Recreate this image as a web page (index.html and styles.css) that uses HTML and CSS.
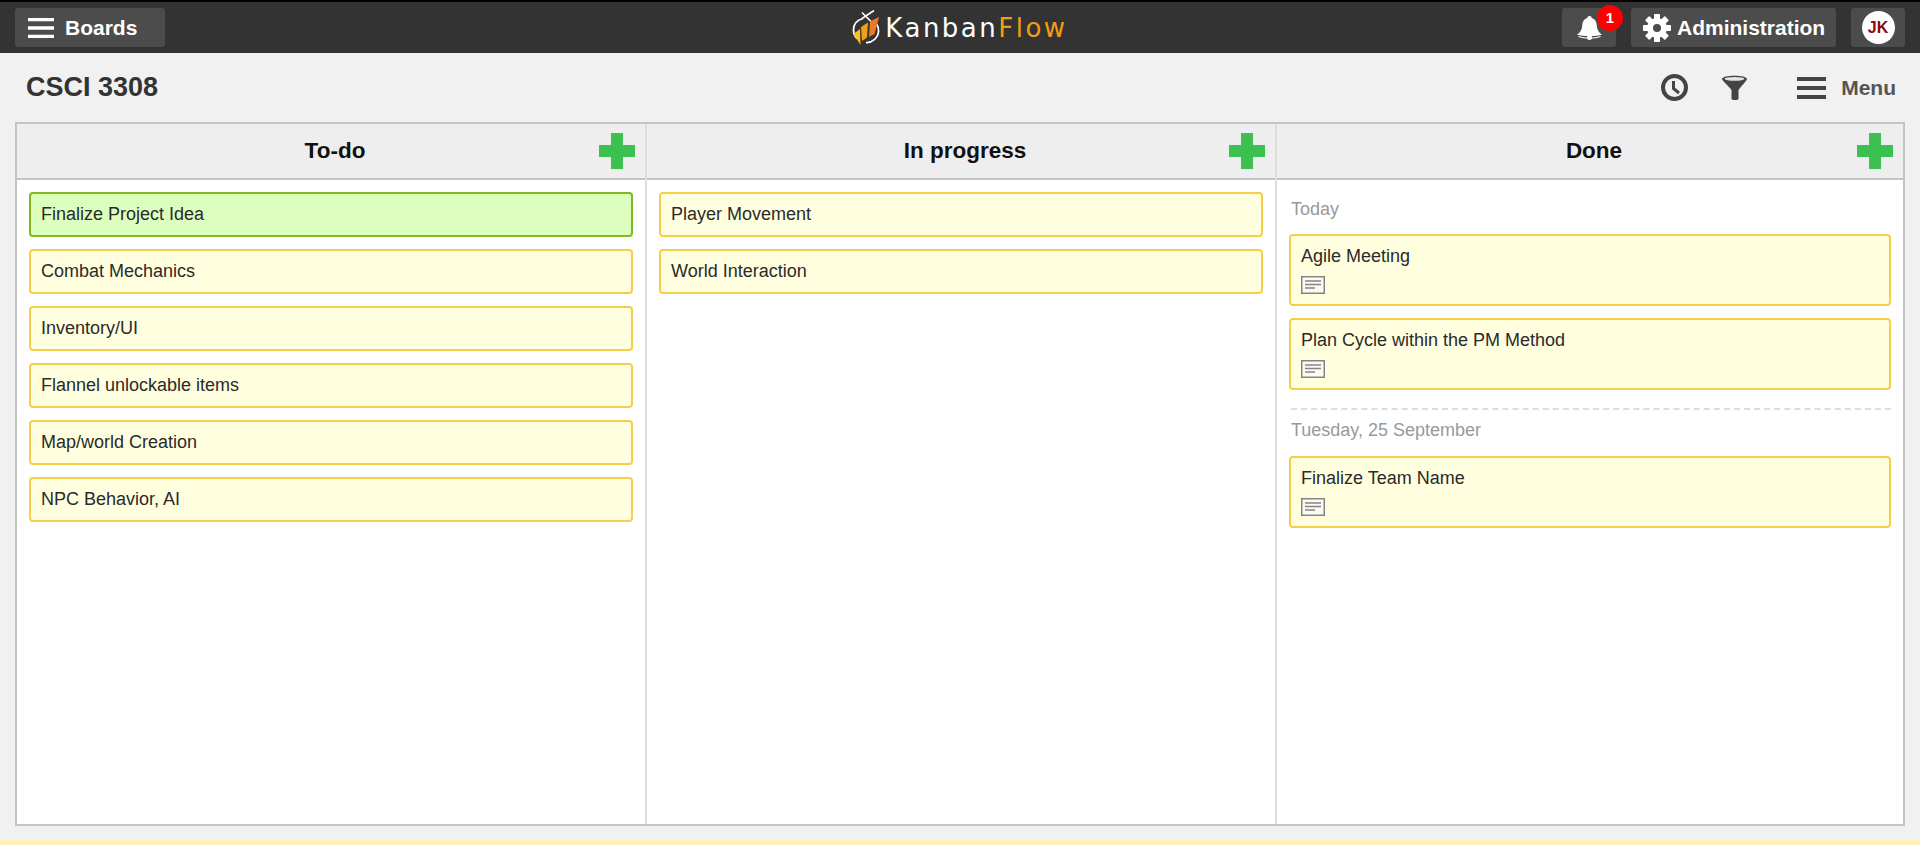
FILE: index.html
```html
<!DOCTYPE html>
<html lang="en">
<head>
  <meta charset="UTF-8" />
  <title>CSCI 3308 - KanbanFlow</title>
  <link rel="stylesheet" href="styles.css">
</head>
<body>

<svg class="sprites" width="0" height="0">
  <symbol id="note" viewBox="0 0 24 18">
    <rect x="0.75" y="0.75" width="22.5" height="16.5" fill="#fbfbf4" stroke="#858585" stroke-width="1.5"/>
    <path d="M4 5h16M4 8.500h16M4 12h10" stroke="#858585" stroke-width="1.300" fill="none"/>
  </symbol>
  <symbol id="plus" viewBox="0 0 36 36">
    <path d="M12 0h12v12h12v12H24v12H12V24H0V12h12z" fill="#3cc04f"/>
  </symbol>
</svg>

<!-- Top bar -->
<header class="topbar">
  <div class="topbar-left">
    <a class="top-btn boards-btn">
      <svg class="burger" width="26" height="20" viewBox="0 0 26 20"><path d="M0 1.500h26M0 10h26M0 18.500h26" stroke="#fff" stroke-width="3.400"/></svg>
      Boards
    </a>
  </div>
  <div class="logo">
    <svg width="28" height="35" viewBox="8 6 28 35">
      <path d="M19 14.500C13 16 9.500 20.500 9.500 26c0 3.500 1.500 6.500 3.500 8.500M22 38.500c6 .5 12-4.500 12.500-11 .2-3-.5-5.500-2-7.500" fill="none" stroke="#fff" stroke-width="1.800"/>
      <path d="M18 8.500l10 10M30 6.500l-12 8" fill="none" stroke="#fff" stroke-width="1.600"/>
      <path d="M9.500 30l6.500-5 .5 16z" fill="#f7c01a"/>
      <path d="M17 23l7-4.500-1 15-5 3.500z" fill="#f0a016"/>
      <path d="M26 17.500l9-4.500-4.500 17-5.500 3z" fill="#ec7a22"/>
    </svg>
    <span class="logo-text">Kanban<span class="logo-flow">Flow</span></span>
  </div>
  <div class="topbar-right">
    <a class="top-btn bell-btn">
      <svg width="25" height="24" viewBox="0 0 25 24">
        <path d="M12.500 0c1.400 0 2.200.8 2.200 2 3.300 1 5 3.800 5.100 7.500.1 4 2 7 5.200 9.200-3 .9-7 1.300-12.500 1.300S3 19.600 0 18.700c3.200-2.200 5.100-5.200 5.200-9.200C5.300 5.800 7 3 10.300 2c0-1.200.8-2 2.200-2z" fill="#fff"/>
        <path d="M1.500 20.500c3 1.200 6.500 1.700 11 1.700s8-.5 11-1.700" fill="none" stroke="#fff" stroke-width="1.200"/>
        <circle cx="12.500" cy="21.500" r="2.500" fill="#fff"/>
      </svg>
      <span class="badge">1</span>
    </a>
    <a class="top-btn admin-btn">
      <svg width="28" height="28" viewBox="0 0 28 28">
        <g fill="#fff">
          <rect x="11" y="0" width="6" height="28" rx="0.800"/>
          <rect x="11" y="0" width="6" height="28" rx="0.800" transform="rotate(45 14 14)"/>
          <rect x="11" y="0" width="6" height="28" rx="0.800" transform="rotate(90 14 14)"/>
          <rect x="11" y="0" width="6" height="28" rx="0.800" transform="rotate(135 14 14)"/>
          <circle cx="14" cy="14" r="10"/>
        </g>
        <circle cx="14" cy="14" r="4" fill="#4c4c4c"/>
      </svg>
      Administration
    </a>
    <a class="top-btn user-btn"><span class="avatar">JK</span></a>
  </div>
</header>

<!-- Board title and tools -->
<div class="board-head">
  <h1>CSCI 3308</h1>
  <div class="tools">
    <svg class="tool-clock" width="27" height="27" viewBox="0 0 27 27"><circle cx="13.500" cy="13.500" r="11.500" fill="none" stroke="#444" stroke-width="4"/><path d="M12.500 7v7.500l5.500 4.500" fill="none" stroke="#444" stroke-width="3"/></svg>
    <svg class="tool-filter" width="25" height="25" viewBox="0 0 25 25"><path d="M0 4c0-4.500 25-4.500 25 0 0 1.500-6.500 8-8.500 11v9c0 1.300-7 1.300-7 0v-9C7.500 12 0 5.500 0 4z" fill="#444"/><ellipse cx="12.500" cy="3.800" rx="10" ry="1.900" fill="#e4e4e4"/></svg>
    <div class="tool-menu">
      <svg width="29" height="22" viewBox="0 0 29 22"><path d="M0 2h29M0 11h29M0 20h29" stroke="#444" stroke-width="3.800"/></svg>
      Menu
    </div>
  </div>
</div>

<!-- Board -->
<main class="board">
  <section class="column">
    <div class="col-head">
      <h2>To-do</h2>
      <svg class="add-task" width="36" height="36"><use href="#plus"/></svg>
    </div>
    <div class="col-body">
      <div class="card green">Finalize Project Idea</div>
      <div class="card">Combat Mechanics</div>
      <div class="card">Inventory/UI</div>
      <div class="card">Flannel unlockable items</div>
      <div class="card">Map/world Creation</div>
      <div class="card">NPC Behavior, AI</div>
    </div>
  </section>

  <section class="column">
    <div class="col-head">
      <h2>In progress</h2>
      <svg class="add-task" width="36" height="36"><use href="#plus"/></svg>
    </div>
    <div class="col-body">
      <div class="card">Player Movement</div>
      <div class="card">World Interaction</div>
    </div>
  </section>

  <section class="column">
    <div class="col-head">
      <h2>Done</h2>
      <svg class="add-task" width="36" height="36"><use href="#plus"/></svg>
    </div>
    <div class="col-body">
      <div class="day-label">Today</div>
      <div class="card has-note">Agile Meeting
        <svg class="note-icon" width="24" height="18"><use href="#note"/></svg>
      </div>
      <div class="card has-note">Plan Cycle within the PM Method
        <svg class="note-icon" width="24" height="18"><use href="#note"/></svg>
      </div>
      <div class="day-split"></div>
      <div class="day-label">Tuesday, 25 September</div>
      <div class="card has-note">Finalize Team Name
        <svg class="note-icon" width="24" height="18"><use href="#note"/></svg>
      </div>
    </div>
  </section>
</main>

<div class="notice-strip"></div>

</body>
</html>
```

FILE: styles.css
```css
html, body {
  height: 100%;
}

body {
  margin: 0;
  height: 845px;
  overflow: hidden;
  display: flex;
  flex-direction: column;
  background: #f1f1f1;
  color: #2a2a2a;
  font-family: "Liberation Sans", Arial, sans-serif;
}

.sprites {
  position: absolute;
}

/* Top bar */
.topbar {
  flex: none;
  height: 51px;
  display: grid;
  grid-template-columns: 1fr auto 1fr;
  align-items: center;
  padding: 0 15px;
  background: #333;
  border-top: 2px solid #000;
}

.topbar-right {
  display: flex;
  justify-content: flex-end;
  gap: 15px;
}

.top-btn {
  height: 39px;
  display: inline-flex;
  align-items: center;
  position: relative;
  box-sizing: border-box;
  border-radius: 3px;
  background: #4c4c4c;
  color: #fff;
  font-size: 21px;
  font-weight: bold;
}

.boards-btn {
  width: 150px;
  padding-left: 13px;
  gap: 11px;
}

.bell-btn {
  width: 54px;
  padding-left: 15px;
}

.badge {
  position: absolute;
  top: -3px;
  right: -7px;
  width: 26px;
  height: 26px;
  border-radius: 50%;
  background: #f00;
  font-size: 15px;
  line-height: 26px;
  text-align: center;
}

.admin-btn {
  width: 205px;
  padding-left: 12px;
  gap: 6px;
}

.user-btn {
  width: 54px;
  justify-content: center;
}

.avatar {
  width: 33px;
  height: 33px;
  border-radius: 50%;
  background: #fff;
  color: #8b0a0a;
  font-size: 16px;
  line-height: 33px;
  text-align: center;
}

.logo {
  display: flex;
  align-items: center;
  gap: 5px;
}

.logo-text {
  color: #fff;
  font-family: "DejaVu Sans", sans-serif;
  font-size: 26px;
  letter-spacing: 2.5px;
}

.logo-flow {
  color: #f09d14;
}

/* Board title row */
.board-head {
  flex: none;
  height: 69px;
  display: flex;
  align-items: center;
  justify-content: space-between;
  padding: 0 24px 0 26px;
}

h1 {
  margin: 0;
  color: #333;
  font-size: 27px;
}

.tools {
  display: flex;
  align-items: center;
  color: #555;
  font-size: 21px;
  font-weight: bold;
}

.tool-filter {
  margin-left: 34px;
}

.tool-menu {
  display: flex;
  align-items: center;
  gap: 15px;
  margin-left: 50px;
}

/* Board */
.board {
  flex: none;
  height: 704px;
  box-sizing: border-box;
  margin: 0 15px;
  display: grid;
  grid-template-columns: 630px 630px 1fr;
  border: 2px solid #c4c4c4;
  background: #fff;
}

.column {
  display: flex;
  flex-direction: column;
  border-right: 2px solid #ddd;
}

.column:last-child {
  border-right: none;
}

.col-head {
  flex: none;
  height: 54px;
  position: relative;
  display: flex;
  align-items: center;
  justify-content: center;
  padding-left: 8px;
  background: #eee;
  border-bottom: 2px solid #c4c4c4;
}

h2 {
  margin: 0;
  color: #111;
  font-size: 22.5px;
}

.add-task {
  position: absolute;
  top: 9px;
  right: 10px;
}

.col-body {
  padding: 12px 12px 0;
}

.card {
  box-sizing: border-box;
  height: 45px;
  margin-bottom: 12px;
  padding: 9px 10px;
  border: 2px solid #f5cf47;
  border-radius: 4px;
  background: #ffffdf;
  font-size: 18px;
  line-height: 22px;
}

.card.green {
  border-color: #80b81e;
  background: #dcffbe;
}

.card.has-note {
  height: 72px;
  padding-top: 9px;
}

.note-icon {
  display: block;
  margin-top: 9px;
}

.day-label {
  margin: 7px 0 15px 2px;
  color: #999;
  font-size: 18px;
  line-height: 20px;
}

.day-split {
  margin: 18px 0 -1px 2px;
  border-top: 2px dashed #ddd;
}

.day-split + .day-label {
  margin: 11px 0 16px 2px;
}

.notice-strip {
  margin-top: 14px;
  flex: 1;
  background: #fdf1b8;
}
```
